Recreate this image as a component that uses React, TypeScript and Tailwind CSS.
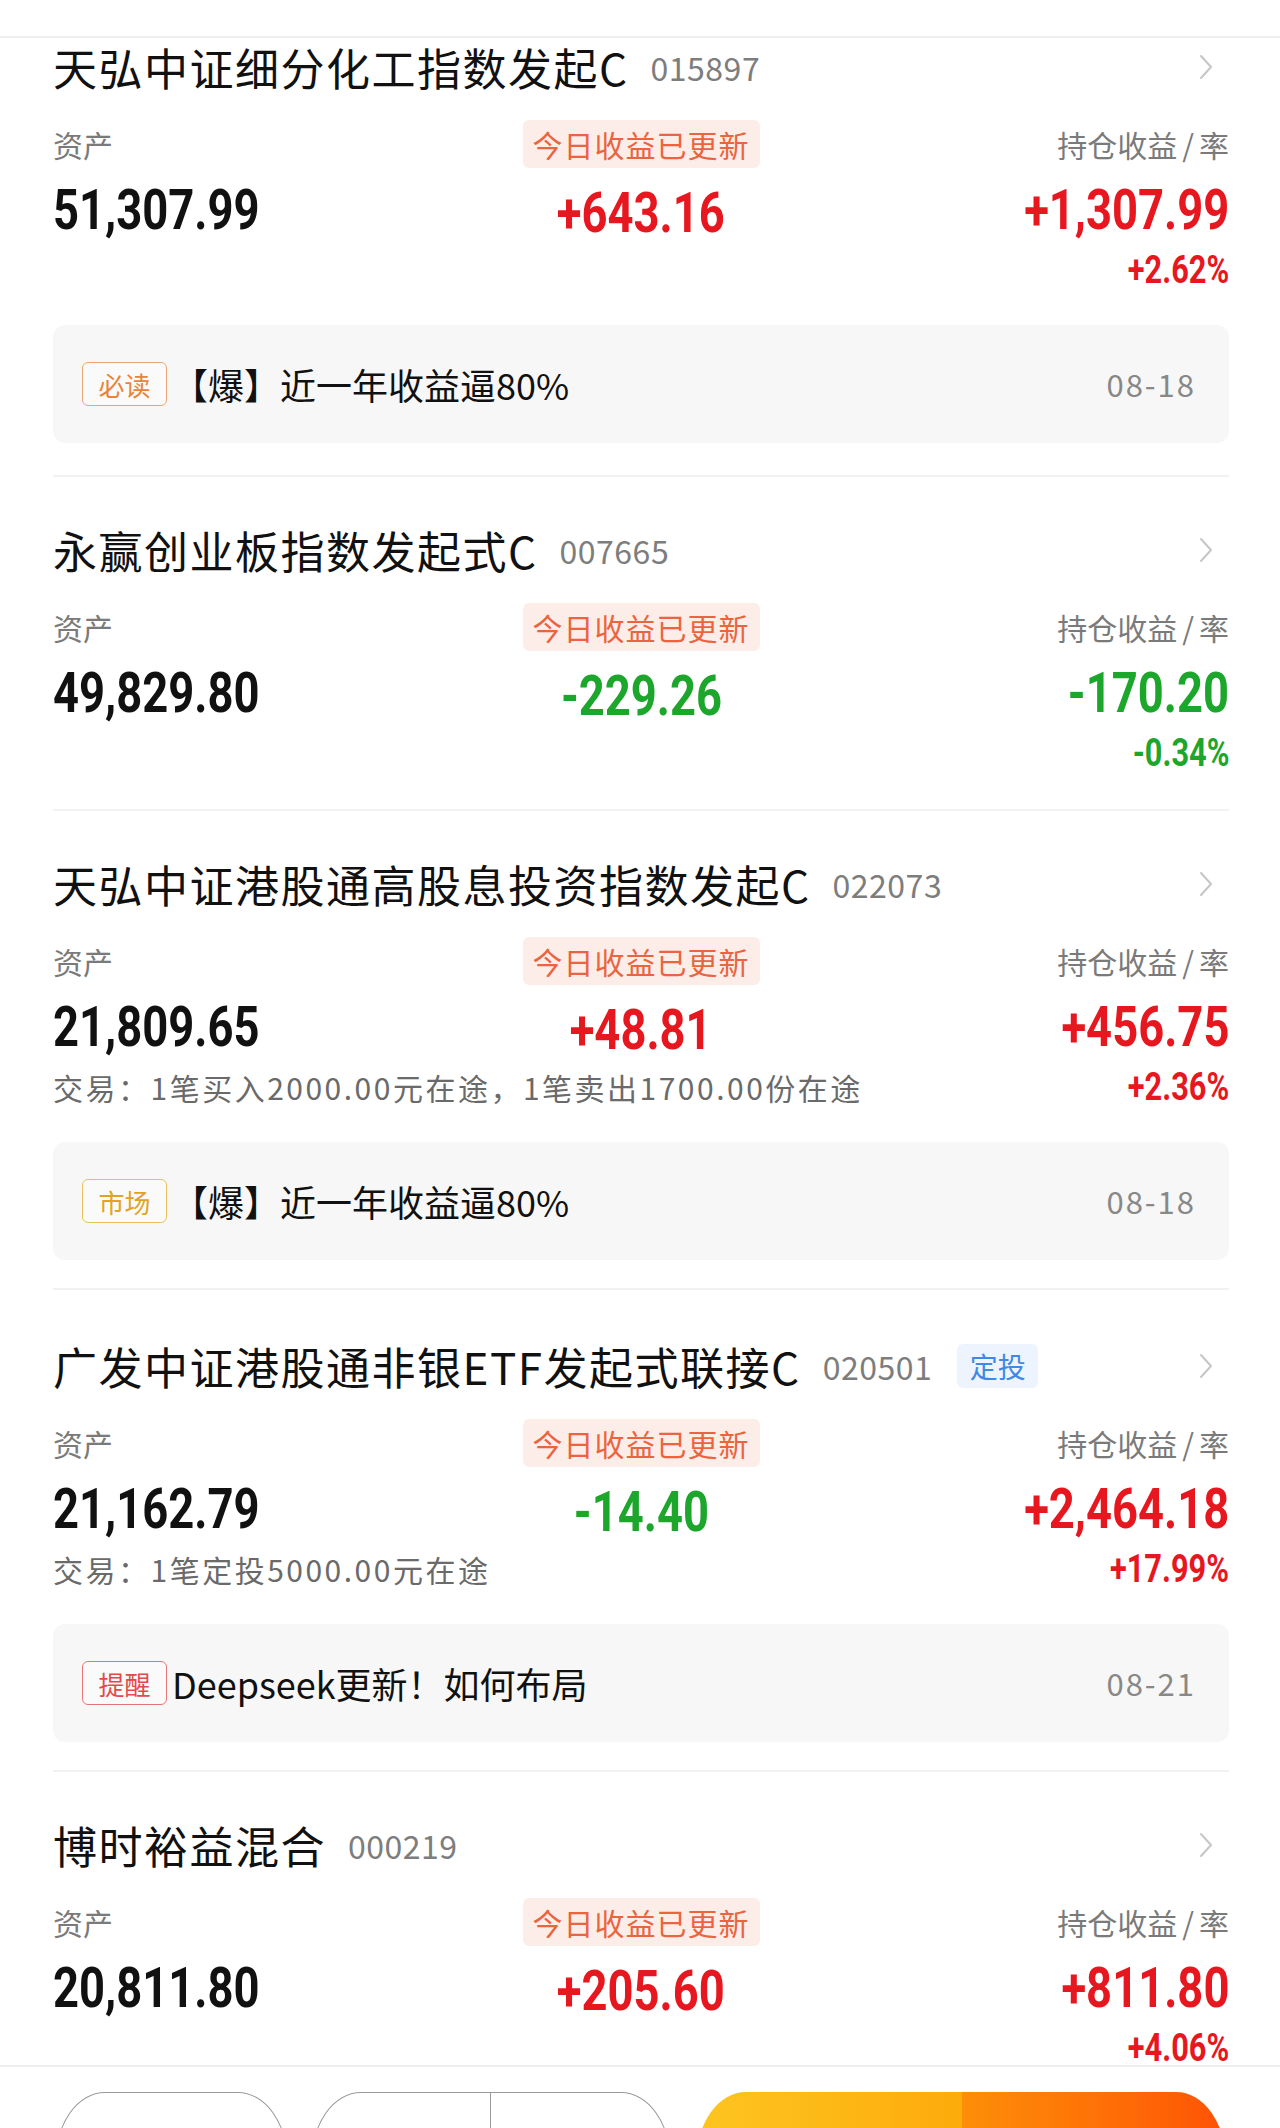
import React from "react";

type Tone = "orange" | "gold" | "red";

type Fund = {
  name: string;
  code: string;
  tag?: string;
  asset: string;
  today: string;
  hold: string;
  rate: string;
  trade?: string;
  notice?: { label: string; tone: Tone; text: string; date: string };
};

const funds: Fund[] = [
  {
    name: "天弘中证细分化工指数发起C",
    code: "015897",
    asset: "51,307.99",
    today: "+643.16",
    hold: "+1,307.99",
    rate: "+2.62%",
    notice: { label: "必读", tone: "orange", text: "【爆】近一年收益逼80%", date: "08-18" },
  },
  {
    name: "永赢创业板指数发起式C",
    code: "007665",
    asset: "49,829.80",
    today: "-229.26",
    hold: "-170.20",
    rate: "-0.34%",
  },
  {
    name: "天弘中证港股通高股息投资指数发起C",
    code: "022073",
    asset: "21,809.65",
    today: "+48.81",
    hold: "+456.75",
    rate: "+2.36%",
    trade: "交易：1笔买入2000.00元在途，1笔卖出1700.00份在途",
    notice: { label: "市场", tone: "gold", text: "【爆】近一年收益逼80%", date: "08-18" },
  },
  {
    name: "广发中证港股通非银ETF发起式联接C",
    code: "020501",
    tag: "定投",
    asset: "21,162.79",
    today: "-14.40",
    hold: "+2,464.18",
    rate: "+17.99%",
    trade: "交易：1笔定投5000.00元在途",
    notice: { label: "提醒", tone: "red", text: "Deepseek更新！如何布局", date: "08-21" },
  },
  {
    name: "博时裕益混合",
    code: "000219",
    asset: "20,811.80",
    today: "+205.60",
    hold: "+811.80",
    rate: "+4.06%",
  },
];

const toneClass: Record<Tone, string> = {
  orange: "border-[#eaa574] text-[#e8843a]",
  gold: "border-[#e8c25e] text-[#e0a424]",
  red: "border-[#e87575] text-[#e24a4a]",
};

function tint(v: string) {
  return v.startsWith("-") ? "text-[#1ca62c]" : "text-[#e7171f]";
}

function Chevron() {
  return (
    <svg width="14" height="26" viewBox="0 0 14 26" className="ml-auto mr-[16px] shrink-0">
      <path d="M2 2 L12 13 L2 24" fill="none" stroke="#c6c6c6" strokeWidth="2" strokeLinecap="round" strokeLinejoin="round" />
    </svg>
  );
}

function FundCard({ fund, first }: { fund: Fund; first: boolean }) {
  // no condensed face installed, so squeeze Roboto to get the DIN-like figures
  const num = "font-['Roboto',sans-serif] font-bold scale-x-[0.81]";
  return (
    <div
      className={
        (first ? "pt-[1px] " : "border-t-2 border-[#f2f2f2] " + (fund.tag ? "pt-[48px] " : "pt-[45px] ")) +
        (fund.notice ? (first ? "pb-[32px]" : "pb-[28px]") : "pb-[36px]")
      }
    >
      <div className="flex h-[56px] items-center">
        <span className="text-[44px] leading-[56px] tracking-[1.5px] text-[#111]">{fund.name}</span>
        <span className="ml-[22px] text-[32px] leading-[56px] tracking-[0.5px] text-[#7d7d7d]">{fund.code}</span>
        {fund.tag && (
          <span className="ml-[25px] flex h-[44px] w-[81px] items-center justify-center rounded-[6px] bg-[#edf4fe] text-[28px] text-[#3f89e4]">
            {fund.tag}
          </span>
        )}
        <Chevron />
      </div>

      <div className="mt-[25px] grid h-[48px] grid-cols-3 items-center">
        <span className="text-[30px] text-[#7a7a7a]">资产</span>
        <span className="justify-self-center rounded-[6px] bg-[#fdede8] px-[10px] text-[30px] leading-[48px] tracking-[1px] text-[#ea6440]">
          今日收益已更新
        </span>
        <span className="justify-self-end text-[30px] text-[#7a7a7a]">
          持仓收益<span className="mx-[5px]">/</span>率
        </span>
      </div>

      <div className="mt-[11px] grid h-[56px] grid-cols-3 items-center">
        <span className={num + " origin-left text-[56px] leading-[56px] text-[#111]"}>{fund.asset}</span>
        <span className={num + " mt-[6px] origin-center justify-self-center text-[56px] leading-[56px] " + tint(fund.today)}>
          {fund.today}
        </span>
        <span className={num + " origin-right justify-self-end text-[56px] leading-[56px] " + tint(fund.hold)}>{fund.hold}</span>
      </div>

      <div className="mt-[15px] flex h-[40px] items-center">
        {fund.trade && <span className="text-[30px] leading-[40px] tracking-[2.5px] text-[#6a6a6a]">{fund.trade}</span>}
        <span className={num + " ml-auto origin-right text-[38px] leading-[40px] " + tint(fund.rate)}>{fund.rate}</span>
      </div>

      {fund.notice && (
        <div className="mt-[35px] flex h-[118px] items-center rounded-[12px] bg-[#f7f7f7] pl-[29px] pr-[33px]">
          <span
            className={
              "flex h-[44px] w-[85px] items-center justify-center rounded-[6px] border-[1.5px] bg-white/40 text-[26px] " +
              toneClass[fund.notice.tone]
            }
          >
            {fund.notice.label}
          </span>
          <span className="ml-[5px] text-[36px] text-[#111]">{fund.notice.text}</span>
          <span className="ml-auto text-[31px] tracking-[2px] text-[#888]">{fund.notice.date}</span>
        </div>
      )}
    </div>
  );
}

export default function App() {
  return (
    <div className="flex h-[2128px] w-[1280px] flex-col overflow-hidden bg-white font-['Noto_Sans_CJK_SC',sans-serif]">
      <div className="h-[38px] shrink-0 border-b-2 border-[#efefef] bg-white" />

      <div className="min-h-0 flex-1 overflow-hidden pl-[53px] pr-[51px]">
        {funds.map((f, i) => (
          <FundCard key={f.code} fund={f} first={i === 0} />
        ))}
      </div>

      <div className="flex h-[63px] shrink-0 overflow-hidden border-t-2 border-[#eeeeee] bg-white pl-[55px] pt-[25px]">
        <div className="h-[120px] w-[233px] shrink-0 rounded-t-[50px_70px] border-[1.5px] border-[#9a9a9a]" />
        <div className="ml-[23px] flex h-[120px] w-[360px] shrink-0 rounded-t-[50px_70px] border-[1.5px] border-[#9a9a9a]">
          <div className="w-[179px] border-r-[1.5px] border-[#9a9a9a]" />
        </div>
        <div className="ml-[25px] flex h-[120px] w-[530px] shrink-0 overflow-hidden rounded-t-[50px_70px]">
          <div className="w-[266px] bg-gradient-to-r from-[#fdc51f] to-[#fdab0b]" />
          <div className="flex-1 bg-gradient-to-r from-[#fd8e08] to-[#fe5105]" />
        </div>
      </div>
    </div>
  );
}
